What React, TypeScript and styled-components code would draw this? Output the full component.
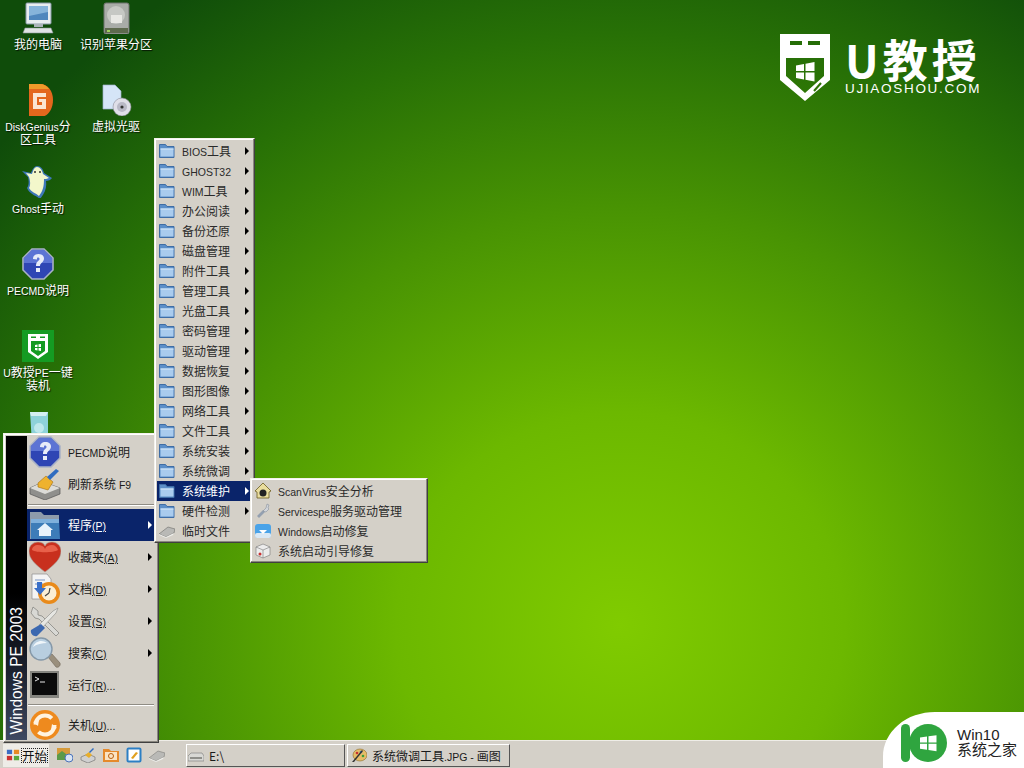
import React from 'react';
import styled, { createGlobalStyle } from 'styled-components';

const CJK = `"Noto Sans CJK SC", "Liberation Sans", sans-serif`;

const GlobalStyle = createGlobalStyle`
  html, body {
    margin: 0;
    padding: 0;
    width: 1024px;
    height: 768px;
    overflow: hidden;
  }
  #root {
    width: 1024px;
    height: 768px;
  }
`;

const Screen = styled.div`
  position: relative;
  width: 1024px;
  height: 768px;
  display: flex;
  flex-direction: column;
  overflow: hidden;
  font-family: ${CJK};
  font-size: 12px;
  color: #1a1a1a;
`;

const Desktop = styled.div`
  position: relative;
  flex: 1;
  display: flex;
  gap: 2px;
  align-items: flex-start;
  background: radial-gradient(ellipse 800px 760px at 620px 625px, #80cb00 0%, #6cb800 28%, #489303 55%, #277006 78%, #0f4c0a 100%);
`;

const IconColumn = styled.div`
  width: 76px;
  display: flex;
  flex-direction: column;
`;

const DeskIcon = styled.div`
  height: 82px;
  padding-top: 2px;
  box-sizing: border-box;
  display: flex;
  flex-direction: column;
  align-items: center;
  gap: 3px;
`;

const DeskLabel = styled.span`
  width: 72px;
  text-align: center;
  color: #fff;
  line-height: 13px;
  text-shadow: 1px 1px 1px rgba(0, 0, 0, 0.75);
`;

const Latin = styled.span`
  font-family: "Liberation Sans", sans-serif;
  font-size: 10.5px;
  line-height: 0;
`;

const Hot = styled(Latin)`
  text-decoration: underline;
`;

const RowLabel = styled.span`
  margin-bottom: 2px;
  white-space: nowrap;
`;

const Logo = styled.div`
  position: absolute;
  left: 780px;
  top: 34px;
  display: flex;
  gap: 15px;
  color: #fff;
`;

const LogoText = styled.div`
  display: flex;
  flex-direction: column;
`;

const LogoName = styled.span`
  font-size: 45px;
  line-height: 46px;
  margin-top: 2px;
  font-weight: 700;
  letter-spacing: 4px;
  white-space: nowrap;
`;

const LogoUrl = styled.span`
  font-family: "Liberation Sans", sans-serif;
  font-size: 13.5px;
  line-height: 14px;
  letter-spacing: 1.7px;
  white-space: nowrap;
`;

const Win10Badge = styled.div`
  position: absolute;
  right: 0;
  bottom: 0;
  width: 141px;
  height: 56px;
  z-index: 5;
  box-sizing: border-box;
  padding: 11px 0 0 18px;
  background: #fff;
  border-top-left-radius: 52px 44px;
  display: flex;
`;

const Win10Text = styled.div`
  display: flex;
  flex-direction: column;
  margin: 5px 0 0 10px;
  color: #222;
  font-size: 15px;
  line-height: 14px;
`;

const Win10Name = styled.span`
  font-family: "Liberation Sans", sans-serif;
`;

const MenuPanel = styled.div`
  position: absolute;
  box-sizing: border-box;
  background: #d4d0c8;
  border: 1px solid;
  border-color: #f4f2ec #404040 #404040 #f4f2ec;
  box-shadow: inset -1px -1px 0 #8a877f, inset 1px 1px 0 #fff;
`;

const StartPanel = styled(MenuPanel)`
  left: 3px;
  top: 433px;
  width: 156px;
  height: 310px;
  z-index: 10;
  padding: 2px 4px 2px 2px;
  display: flex;
`;

const SideBar = styled.div`
  width: 21px;
  flex: none;
  background: linear-gradient(#000 0%, #000 52%, #1c2230 78%, #3f4a62 100%);
  display: flex;
  justify-content: center;
  align-items: flex-end;
  padding-bottom: 6px;
  box-sizing: border-box;
`;

const SideText = styled.span`
  writing-mode: vertical-rl;
  transform: rotate(180deg);
  font-family: "Liberation Sans", sans-serif;
  font-size: 15.6px;
  line-height: 21px;
  color: #fff;
  white-space: nowrap;
`;

const StartList = styled.div`
  flex: 1;
  min-width: 0;
  display: flex;
  flex-direction: column;
`;

const StartRow = styled.div<{ $active?: boolean }>`
  height: 32px;
  flex: none;
  display: flex;
  align-items: center;
  padding-left: 2px;
  gap: 7px;
  position: relative;
  background: ${p => (p.$active ? '#0a246a' : 'transparent')};
  color: ${p => (p.$active ? '#fff' : '#1a1a1a')};
`;

const Rule = styled.div<{ $top: number }>`
  height: 2px;
  margin: ${p => p.$top}px 0 3px 1px;
  flex: none;
  background: linear-gradient(#8f8c84 50%, #fff 50%);
`;

const Arrow = styled.i<{ $light?: boolean }>`
  position: absolute;
  top: 50%;
  margin-top: -4px;
  width: 0;
  height: 0;
  border-style: solid;
  border-width: 4px 0 4px 4px;
  border-color: transparent transparent transparent ${p => (p.$light ? '#fff' : '#000')};
`;

const StartArrow = styled(Arrow)`
  right: 2px;
`;

const ProgramsPanel = styled(MenuPanel)`
  left: 154px;
  top: 138px;
  width: 101px;
  height: 405px;
  z-index: 20;
  padding: 2px;
`;

const SubPanel = styled(MenuPanel)`
  left: 250px;
  top: 478px;
  width: 178px;
  height: 85px;
  z-index: 30;
  padding: 2px;
`;

const MenuRow = styled.div<{ $active?: boolean }>`
  position: relative;
  height: 20px;
  display: flex;
  align-items: center;
  gap: 7px;
  padding-left: 2px;
  background: ${p => (p.$active ? '#0a246a' : 'transparent')};
  color: ${p => (p.$active ? '#fff' : '#2a2a2a')};
`;

const MenuArrow = styled(Arrow)`
  right: 3px;
`;

const Taskbar = styled.div`
  height: 28px;
  flex: none;
  box-sizing: border-box;
  background: #d4d0c8;
  border-top: 1px solid #efede8;
  display: flex;
  align-items: center;
  padding: 1px 0 0 3px;
`;

const StartButton = styled.div`
  width: 46px;
  height: 23px;
  flex: none;
  box-sizing: border-box;
  background: #eeece7;
  display: flex;
  align-items: center;
  gap: 2px;
  padding-left: 3px;
  margin-right: 8px;
`;

const StartCaption = styled.span`
  color: #111;
  font-size: 12.5px;
  line-height: 13px;
  white-space: nowrap;
  outline: 1px dotted #222;
`;

const QuickBar = styled.div`
  display: flex;
  align-items: center;
  gap: 7px;
  width: 129px;
  flex: none;
`;

const TaskButton = styled.div<{ $wide?: boolean }>`
  width: ${p => (p.$wide ? 163 : 159)}px;
  height: 23px;
  margin-right: 2px;
  box-sizing: border-box;
  border: 1px solid;
  border-color: #fff #555 #555 #fff;
  display: flex;
  align-items: center;
  gap: 5px;
  padding-left: ${p => (p.$wide ? 3 : 1)}px;
  color: #1a1a1a;
  white-space: nowrap;
`;

const Mixed = ({ text }: { text: string }) => (
  <>
    {text.split(/(\([A-Z]\)|[\x00-\x7f]+)/).map((part, i) => {
      if (/^\([A-Z]\)$/.test(part)) return <Hot key={i}>{part}</Hot>;
      if (/^[\x00-\x7f]+$/.test(part)) return <Latin key={i}>{part}</Latin>;
      return part;
    })}
  </>
);

type IconProps = { size?: number };

const Glyph = ({ size = 32, view = 32, children }: IconProps & { view?: number; children: React.ReactNode }) => (
  <svg width={size} height={size} viewBox={`0 0 ${view} ${view}`} style={{ flex: 'none', display: 'block' }}>
    {children}
  </svg>
);

const ComputerIcon = () => (
  <Glyph>
    <rect x="4" y="1" width="25" height="21" rx="1" fill="#e8edf0" stroke="#8a9aa8" />
    <rect x="7" y="4" width="19" height="14" fill="#4f87bd" />
    <path d="M7 4h19v6L7 14z" fill="#86b4da" />
    <rect x="12" y="22" width="9" height="3" fill="#aab4ba" />
    <path d="M3 26h26l2 5H1z" fill="#dfe3e4" stroke="#8c9499" strokeWidth=".6" />
  </Glyph>
);

const HddIcon = () => (
  <Glyph>
    <rect x="4" y="1" width="25" height="31" rx="2" fill="#a9aca8" stroke="#6f726e" />
    <circle cx="16" cy="13" r="9" fill="#c6c8c4" />
    <rect x="11" y="13" width="11" height="8" fill="#e8e8e4" />
    <rect x="5" y="26" width="23" height="5" fill="#5e6a4e" />
    <rect x="7" y="28" width="3" height="2" fill="#9fd060" />
  </Glyph>
);

const DiskGeniusIcon = () => (
  <Glyph>
    <path d="M7 0h11c8 0 13 7 13 16s-5 17-13 17H7z" fill="#e4671d" />
    <path d="M7 0h11c4 0 7 2 9 5H7z" fill="#f09a2a" />
    <path d="M11 9h13v4H15v8h5v-3h-3v-3h7v10H11z" fill="#fbe5d2" />
  </Glyph>
);

const VirtualDriveIcon = () => (
  <Glyph>
    <path d="M3 1h12l6 6v18H3z" fill="#d5e5f7" stroke="#9db2cc" strokeWidth=".7" />
    <circle cx="22" cy="23" r="9" fill="#dfdfe8" stroke="#8d8d99" strokeWidth=".6" />
    <circle cx="22" cy="23" r="5" fill="#b9b9c6" />
    <circle cx="22" cy="23" r="1.6" fill="#333" />
  </Glyph>
);

const GhostIcon = () => (
  <Glyph>
    <path d="M15 0c4 0 6 3 7 7l8 5c-1 2-4 3-6 3 1 7-1 12-6 18-3-3-11-5-13-11 2-3 2-7 1-11L0 5l9 2c1-3 3-7 6-7z" fill="#3e78b8" />
    <path d="M15 1c3 0 5 3 6 7l6 4c-2 1-4 1-5 1 0 7-1 12-5 17-3-3-8-4-10-8 2-3 1-8 0-11L4 7l6 1c1-3 2-7 5-7z" fill="#f3f7cb" />
    <circle cx="13" cy="6" r="1" fill="#333" />
    <circle cx="18" cy="6" r="1" fill="#333" />
  </Glyph>
);

const HelpIcon = ({ size = 32 }: IconProps) => (
  <Glyph size={size}>
    <path d="M10 1h12l9 9v12l-9 9H10l-9-9V10z" fill="#2f46b4" stroke="#a9b2c6" strokeWidth="1.6" />
    <path d="M10 2h12l8 8v5H2v-5z" fill="#5c74d4" />
    <path d="M11 11c0-3 2-5 5.500-5s5.500 2 5.500 4.500c0 4-4 4-4 7.500h-4c0-5 3.500-5 3.500-7 0-1-.5-1.500-1.500-1.500S15 10 15 11.500z" fill="#e8ecf8" />
    <rect x="14" y="20" width="4" height="4" fill="#e8ecf8" />
  </Glyph>
);

const ShieldLogo = () => (
  <svg width="50" height="67" viewBox="0 0 50 67" style={{ flex: 'none' }}>
    <path
      fillRule="evenodd"
      fill="#fff"
      d="M0 0H50V46L25 67L0 46ZM6 24V42L25 59L44 42V24ZM10 7V11H22V7ZM28 7V11H40V7Z"
    />
    <path d="M34 57L41 49" stroke="#2f7206" strokeWidth="2" />
    <path d="M16 31.500l8-1.500v7h-8zM25.500 29.800l9-1.800v9h-9zM16 38.500h8v7l-8-1.500zM25.500 38.500h9v9l-9-1.800z" fill="#fff" />
  </svg>
);

const UPeIcon = () => (
  <Glyph>
    <rect width="32" height="32" fill="#159b22" />
    <path fillRule="evenodd" fill="#fff" d="M6 4H26V22L16 29L6 22ZM9 11V21L16 26L23 21V11Z" />
    <rect x="9" y="6.500" width="5" height="1.500" fill="#159b22" />
    <rect x="18" y="6.500" width="5" height="1.500" fill="#159b22" />
    <path d="M13 15l2.500-.5v2.500H13zM16.500 14.300l2.500-.3V17h-2.500zM13 18h2.500v2.500L13 20zM16.500 18H19v3l-2.500-.4z" fill="#fff" />
  </Glyph>
);

const TealDocIcon = () => (
  <Glyph>
    <path d="M8 0h18v32H10z" fill="#8ed2da" />
    <path d="M8 0h18l-2 4H9z" fill="#d4eff2" />
    <circle cx="17" cy="16" r="5" fill="#bfe8ec" />
  </Glyph>
);

const BroomIcon = () => (
  <Glyph>
    <path d="M1 20l13-6 17 6v6l-15 6-15-6z" fill="#8f8f8c" stroke="#555" strokeWidth=".7" />
    <path d="M1 20l15 6 15-6-17-6z" fill="#dcdcd8" />
    <path d="M9 15l8-7 7 6-5 8-10-3z" fill="#eeb22e" stroke="#a46e10" strokeWidth=".6" />
    <path d="M18 9l9-8 3 2-9 9z" fill="#2f6cc0" />
  </Glyph>
);

const HomeFolderIcon = () => (
  <Glyph>
    <path d="M1 3h11l3 3h15v24H1z" fill="#8d9bab" />
    <path d="M2 10h28l1 20H2z" fill="#3d7cb8" />
    <path d="M2 10h28v4H2z" fill="#7fb0dc" />
    <path d="M16 14l8 7h-2v6h-12v-6H8z" fill="#e8f2fb" />
  </Glyph>
);

const HeartIcon = () => (
  <Glyph>
    <path d="M16 31C6 23 0 18 0 10 0 4 5 1 9 1c3 0 6 1 7 4 1-3 4-4 7-4 4 0 9 3 9 9 0 8-6 13-16 21z" fill="#c8301e" stroke="#a5a098" strokeWidth=".6" />
    <path d="M3 9c0-3 3-5 6-5 3 0 6 1 7 4 1-3 4-4 7-4 3 0 5 2 6 5-4 3-22 3-26 0z" fill="#e8604a" />
  </Glyph>
);

const ClockDocIcon = () => (
  <Glyph>
    <path d="M3 1h15l4 5v20H3z" fill="#f4f4f4" stroke="#8e8e8e" strokeWidth=".7" />
    <path d="M6 7h10M6 11h8" stroke="#7b94c4" />
    <circle cx="20" cy="20" r="11" fill="#e98a1a" />
    <circle cx="20" cy="20" r="7.500" fill="#fbeed4" />
    <path d="M20 20l-4 3M20 20l1-5" stroke="#444" strokeWidth="1.2" />
    <path d="M8 9h5v6h4l-6 7-6-7h3z" fill="#3a6fc8" />
  </Glyph>
);

const ToolsIcon = () => (
  <Glyph>
    <path d="M4 2l5 4 0 4 4 1 17 17-3 3L10 14l-4-1-4-5z" fill="#d8d8d4" stroke="#7c7c78" strokeWidth=".7" />
    <path d="M29 3l-2 5-14 15-3-3L24 6z" fill="#e6e6e2" stroke="#8a8a86" strokeWidth=".6" />
    <path d="M12 19l4 4-8 8c-3 1-7-2-6-6z" fill="#3c68b0" />
  </Glyph>
);

const LensIcon = () => (
  <Glyph>
    <path d="M19 20l4-3 8 9c1 3-2 5-4 4z" fill="#9a8f7d" stroke="#6e6558" strokeWidth=".6" />
    <circle cx="12" cy="12" r="11" fill="#b8cee0" stroke="#8598a8" strokeWidth="1.400" />
    <path d="M4 10c2-6 9-8 14-4-5 0-10 1-14 4z" fill="#f0f6fa" />
  </Glyph>
);

const ConsoleIcon = () => (
  <Glyph>
    <rect x="1" y="2" width="29" height="27" fill="#85857f" />
    <rect x="3" y="4" width="25" height="22" fill="#0b0b0b" />
    <path d="M6 8l4 2-4 2M11 13h5" stroke="#e8e8e8" fill="none" />
  </Glyph>
);

const PowerIcon = () => (
  <Glyph>
    <circle cx="16" cy="16" r="15" fill="#ee8a1e" />
    <circle cx="16" cy="16" r="9.500" fill="none" stroke="#fff3e0" strokeWidth="4" strokeDasharray="22 8" />
    <path d="M4 13l6-2-1 6zM28 19l-6 2 1-6z" fill="#fff3e0" />
  </Glyph>
);

const FolderIcon = () => (
  <Glyph size={16} view={16}>
    <path d="M0.500 1.500h6l1.500 2h7v11H.5z" fill="#5d8fc8" stroke="#3f6da6" />
    <path d="M1.500 5.500h13v8h-13z" fill="#a9cbee" />
    <path d="M1.500 5.500h13v1h-13z" fill="#d9e9f8" />
  </Glyph>
);

const EraserIcon = () => (
  <Glyph size={16} view={16}>
    <path d="M0 11l9-7 7 2-1 4-8 4z" fill="#b9b9b6" stroke="#6d6d6a" strokeWidth=".6" />
    <path d="M0 11l7 3 8-4-1 2-7 3-7-3z" fill="#efefec" />
  </Glyph>
);

const ScanHouseIcon = () => (
  <Glyph size={16} view={16}>
    <path d="M8 0l8 8-2 1v6H2V9L0 8z" fill="#e9dd9e" stroke="#6a5b20" strokeWidth=".8" />
    <circle cx="8" cy="10" r="3.500" fill="#222" />
  </Glyph>
);

const ServiceIcon = () => (
  <Glyph size={16} view={16}>
    <path d="M4 15l-2-2 6-6 2 2z" fill="#94a0b0" />
    <path d="M8 8l3-3 1-4 2 1-1 3 1 1-3 3z" fill="#d0d4da" stroke="#7b8492" strokeWidth=".5" />
  </Glyph>
);

const WinRepairIcon = () => (
  <Glyph size={16} view={16}>
    <rect x="0" y="1" width="16" height="14" rx="3" fill="#4aa3e8" />
    <rect x="0" y="10" width="16" height="5" rx="2" fill="#d9e8f4" />
    <path d="M4 7h8l-4 4z" fill="#fff" />
  </Glyph>
);

const BootRepairIcon = () => (
  <Glyph size={16} view={16}>
    <path d="M8 1l7 3v8l-7 3-7-3V4z" fill="#ececec" stroke="#777" strokeWidth=".6" />
    <path d="M1 4l7 3 7-3M8 7v8" stroke="#777" strokeWidth=".6" fill="none" />
    <circle cx="5" cy="11" r="1.500" fill="#c83232" />
  </Glyph>
);

const FlagIcon = () => (
  <Glyph size={14} view={16}>
    <rect x="1" y="2" width="6" height="5" fill="#3d6ec4" />
    <rect x="9" y="2" width="6" height="5" fill="#e88a22" />
    <rect x="1" y="9" width="6" height="5" fill="#cc3232" />
    <rect x="9" y="9" width="6" height="5" fill="#58a83c" />
  </Glyph>
);

const Quick = ({ children }: { children: React.ReactNode }) => (
  <Glyph size={16} view={16}>{children}</Glyph>
);

const QuickIcons = [
  <Quick key="a">
    <rect x="0" y="1" width="13" height="12" fill="#d59a3a" />
    <path d="M0 8l5-4 8 6v3H0z" fill="#5b9a48" />
    <circle cx="12" cy="11" r="4" fill="#d8e4f4" stroke="#4a72b8" />
  </Quick>,
  <Quick key="b">
    <path d="M1 10l7-3 7 3v3l-7 3-7-3z" fill="#d0d0d0" stroke="#555" strokeWidth=".5" />
    <path d="M5 8l4-3 3 3-3 3z" fill="#e8ae2a" />
    <path d="M9 5l4-4 1 1-4 4z" fill="#2f6cc0" />
  </Quick>,
  <Quick key="c">
    <path d="M0 2h6l2 2h8v11H0z" fill="#e58a2c" />
    <rect x="2" y="5" width="12" height="8" fill="#fbe3c2" />
    <circle cx="8" cy="9" r="2.500" fill="none" stroke="#b85e10" />
  </Quick>,
  <Quick key="d">
    <rect x="1.500" y="1.500" width="13" height="13" rx="1" fill="#fff" stroke="#2c7fc4" strokeWidth="2" />
    <path d="M5 11l5-6 2 1-5 6z" fill="#e0a020" />
  </Quick>,
  <Quick key="e">
    <path d="M0 11l9-7 7 2-1 4-8 4z" fill="#b9b9b6" stroke="#7d7d7a" strokeWidth=".6" />
    <path d="M0 11l7 3 8-4-1 2-7 3-7-3z" fill="#efefec" />
  </Quick>,
];

const DriveTaskIcon = () => (
  <Glyph size={16} view={16}>
    <path d="M0 9l3-3h11l2 3v5H0z" fill="#d8d8d4" stroke="#777" strokeWidth=".6" />
    <rect x="2" y="10" width="12" height="2" fill="#8f8f8a" />
  </Glyph>
);

const PaletteIcon = () => (
  <Glyph size={16} view={16}>
    <ellipse cx="9" cy="8" rx="7" ry="6" fill="#e6bc68" stroke="#8a6a24" strokeWidth=".6" />
    <circle cx="6" cy="6" r="1.300" fill="#c83232" />
    <circle cx="10" cy="5" r="1.300" fill="#2f7fd0" />
    <circle cx="12" cy="9" r="1.300" fill="#3aa03a" />
    <path d="M1 15L11 3l1 1L3 15z" fill="#333" />
  </Glyph>
);

const Win10Mark = () => (
  <svg width="46" height="40" viewBox="0 0 46 40" style={{ flex: 'none' }}>
    <rect x="0" y="1" width="9" height="38" rx="4.500" fill="#2fa53f" />
    <circle cx="27" cy="20" r="19" fill="#2fa53f" />
    <path d="M19 14.500l7-1v6h-7zM27.500 13.300l8-1.100v7.300h-8zM19 20.800h7v6l-7-1zM27.500 20.800h8v7.400l-8-1.100z" fill="#fff" />
  </svg>
);

const leftIcons: [React.ReactNode, string][] = [
  [<ComputerIcon />, '我的电脑'],
  [<DiskGeniusIcon />, 'DiskGenius分区工具'],
  [<GhostIcon />, 'Ghost手动'],
  [<HelpIcon />, 'PECMD说明'],
  [<UPeIcon />, 'U教授PE一键装机'],
  [<TealDocIcon />, ''],
];

const rightIcons: [React.ReactNode, string][] = [
  [<HddIcon />, '识别苹果分区'],
  [<VirtualDriveIcon />, '虚拟光驱'],
];

const startTop: [React.ReactNode, string][] = [
  [<HelpIcon />, 'PECMD说明'],
  [<BroomIcon />, '刷新系统 F9'],
];

const startMid: [React.ReactNode, string, boolean, boolean][] = [
  [<HomeFolderIcon />, '程序(P)', true, true],
  [<HeartIcon />, '收藏夹(A)', true, false],
  [<ClockDocIcon />, '文档(D)', true, false],
  [<ToolsIcon />, '设置(S)', true, false],
  [<LensIcon />, '搜索(C)', true, false],
  [<ConsoleIcon />, '运行(R)...', false, false],
];

const programs = [
  'BIOS工具', 'GHOST32', 'WIM工具', '办公阅读', '备份还原', '磁盘管理', '附件工具',
  '管理工具', '光盘工具', '密码管理', '驱动管理', '数据恢复', '图形图像', '网络工具',
  '文件工具', '系统安装', '系统微调', '系统维护', '硬件检测',
];

const repairs: [React.ReactNode, string][] = [
  [<ScanHouseIcon />, 'ScanVirus安全分析'],
  [<ServiceIcon />, 'Servicespe服务驱动管理'],
  [<WinRepairIcon />, 'Windows启动修复'],
  [<BootRepairIcon />, '系统启动引导修复'],
];

const App = () => {
  return (
    <Screen>
      <GlobalStyle />
      <Desktop>
        <IconColumn>
          {leftIcons.map(([icon, label], i) => (
            <DeskIcon key={i}>
              {icon}
              <DeskLabel><Mixed text={label} /></DeskLabel>
            </DeskIcon>
          ))}
        </IconColumn>
        <IconColumn>
          {rightIcons.map(([icon, label], i) => (
            <DeskIcon key={i}>
              {icon}
              <DeskLabel><Mixed text={label} /></DeskLabel>
            </DeskIcon>
          ))}
        </IconColumn>

        <Logo>
          <ShieldLogo />
          <LogoText>
            <LogoName>U教授</LogoName>
            <LogoUrl>UJIAOSHOU.COM</LogoUrl>
          </LogoText>
        </Logo>

        <StartPanel>
          <SideBar>
            <SideText>Windows PE 2003</SideText>
          </SideBar>
          <StartList>
            {startTop.map(([icon, label]) => (
              <StartRow key={label}>
                {icon}
                <RowLabel><Mixed text={label} /></RowLabel>
              </StartRow>
            ))}
            <Rule $top={4} />
            {startMid.map(([icon, label, arrow, active]) => (
              <StartRow key={label} $active={active}>
                {icon}
                <RowLabel><Mixed text={label} /></RowLabel>
                {arrow && <StartArrow $light={active} />}
              </StartRow>
            ))}
            <Rule $top={3} />
            <StartRow>
              <PowerIcon />
              <RowLabel><Mixed text="关机(U)..." /></RowLabel>
            </StartRow>
          </StartList>
        </StartPanel>

        <ProgramsPanel>
          {programs.map(name => (
            <MenuRow key={name} $active={name === '系统维护'}>
              <FolderIcon />
              <RowLabel><Mixed text={name} /></RowLabel>
              <MenuArrow $light={name === '系统维护'} />
            </MenuRow>
          ))}
          <MenuRow>
            <EraserIcon />
            <RowLabel>临时文件</RowLabel>
          </MenuRow>
        </ProgramsPanel>

        <SubPanel>
          {repairs.map(([icon, label]) => (
            <MenuRow key={label}>
              {icon}
              <RowLabel><Mixed text={label} /></RowLabel>
            </MenuRow>
          ))}
        </SubPanel>
      </Desktop>

      <Taskbar>
        <StartButton>
          <FlagIcon />
          <StartCaption>开始</StartCaption>
        </StartButton>
        <QuickBar>{QuickIcons}</QuickBar>
        <TaskButton>
          <DriveTaskIcon />
          E:\
        </TaskButton>
        <TaskButton $wide>
          <PaletteIcon />
          <span><Mixed text="系统微调工具.JPG - 画图" /></span>
        </TaskButton>
      </Taskbar>

      <Win10Badge>
        <Win10Mark />
        <Win10Text>
          <Win10Name>Win10</Win10Name>
          系统之家
        </Win10Text>
      </Win10Badge>
    </Screen>
  );
};

export default App;
